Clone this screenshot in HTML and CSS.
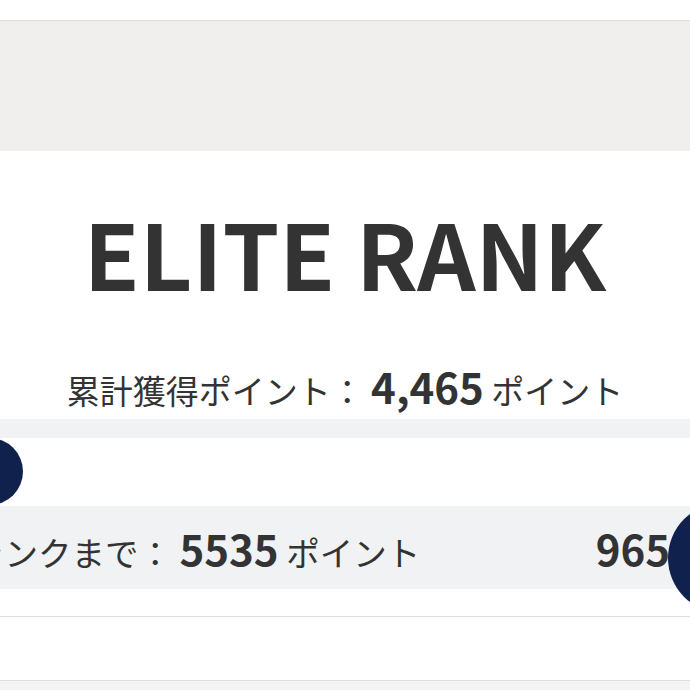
FILE: index.html
```html
<!DOCTYPE html>
<html lang="ja">
<head>
<meta charset="utf-8">
<link rel="stylesheet" href="styles.css">
</head>
<body>
<div class="page">
  <div class="top-gap"></div>
  <div class="banner"></div>
  <section class="card">
    <h1 class="rank">ELITE RANK</h1>
    <p class="total">累計獲得ポイント： <b class="num">4,465</b> ポイント</p>
    <div class="progress">
      <div class="track"></div>
      <div class="gauge"><span class="marker"></span></div>
      <div class="next">
        <p class="next-text">次のランクまで： <b class="num">5535</b> ポイント</p>
        <b class="goal num">965</b>
      </div>
    </div>
    <div class="spacer"></div>
    <div class="row"></div>
    <div class="foot"></div>
  </section>
  <span class="fab"></span>
</div>
</body>
</html>
```
FILE: styles.css
```css
* { box-sizing: border-box; }
html, body { margin: 0; padding: 0; background: #fff; }
body {
  font-family: "Noto Sans CJK JP", "Noto Sans", sans-serif;
  color: #333;
}
.page {
  position: relative;
  width: 690px;
  height: 690px;
  overflow: hidden;
}
.top-gap { height: 20px; background: #fff; }
.banner {
  height: 131px;
  background: #f0efee;
  border-top: 1px solid #dcdcdc;
}
.card { background: #fff; }
.rank {
  margin: 0;
  padding-top: 50px;
  font-size: 91px;
  font-weight: 700;
  line-height: 100px;
  text-align: center;
  letter-spacing: 0;
}
.total {
  margin: 60px 0 0;
  font-size: 33px;
  line-height: 50px;
  text-align: center;
  white-space: nowrap;
}
.num { font-weight: 700; font-size: 42px; }
.progress { margin-top: 4px; }
.track { height: 19px; background: #f0f2f4; }
.gauge { position: relative; height: 68px; background: #fff; }
.marker {
  position: absolute;
  left: -44px;
  top: 0;
  width: 67px;
  height: 67px;
  border-radius: 50%;
  background: #11214e;
}
.next {
  height: 83px;
  background: #f0f2f4;
  display: flex;
  align-items: center;
  justify-content: space-between;
  white-space: nowrap;
}
.next-text { margin: 0 0 0 -96px; font-size: 33.5px; }
.goal { margin-right: 20px; }
.spacer { height: 27px; }
.row {
  height: 65px;
  border-top: 1px solid #dedede;
  border-bottom: 1px solid #dedede;
}
.foot { height: 20px; background: #f4f4f4; }
.fab {
  position: absolute;
  left: 668px;
  top: 503px;
  width: 110px;
  height: 110px;
  border-radius: 50%;
  background: #11214e;
}
```
